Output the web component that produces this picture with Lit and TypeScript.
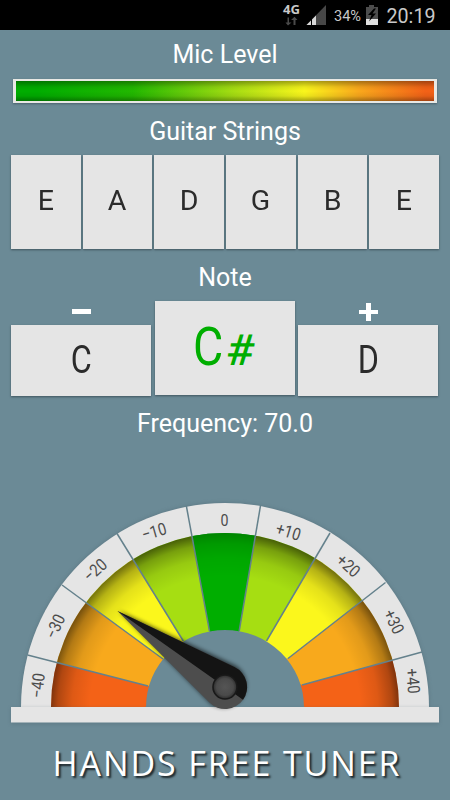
import { LitElement, html, svg, css } from "lit";
import { customElement, property } from "lit/decorators.js";

type Pt = [number, number];

// Dividers between the scale segments: rim point, hub point.
const DIVIDERS: [Pt, Pt][] = [
  [[20, 707], [145, 707]],
  [[27.5, 655], [148, 686]],
  [[62, 585], [163, 659]],
  [[117, 533.5], [183.3, 641]],
  [[186.3, 505.7], [209.5, 631]],
  [[260.5, 505.7], [239.2, 631]],
  [[330, 533], [266.5, 641]],
  [[385.5, 582.5], [288, 658.5]],
  [[422, 652], [302, 685]],
  [[430, 707], [305, 707]],
];

const COLORS = [
  "#f46217", "#f8a91c", "#fbf71c", "#a6de12", "#00ae00",
  "#a6de12", "#fbf71c", "#f8a91c", "#f46217",
];

// label, x, y, rotation, drawn length
const LABELS: [string, number, number, number, number][] = [
  ["−40", 37.5, 685.5, -84, 25],
  ["−30", 55, 626.5, -65, 25],
  ["−20", 95, 570, -42, 25],
  ["−10", 154, 531.5, -16, 25],
  ["0", 224.5, 519.5, 0, 8],
  ["+10", 288.5, 531.5, 17, 25],
  ["+20", 348.5, 565.5, 42, 25],
  ["+30", 394, 621.5, 64, 25],
  ["+40", 413, 681, 85, 25],
];

@customElement("tuner-status")
class TunerStatus extends LitElement {
  static styles = css`
    :host { display: flex; height: 30px; background: #000; justify-content: flex-end; font-family: Roboto, sans-serif; color: #c9c9c9; }
    svg { display: block; }
  `;
  render() {
    return html`<svg width="180" height="30" viewBox="270 0 180 30" font-family="Roboto, sans-serif">
      <text x="283" y="14" font-size="13" font-weight="700" textLength="17" lengthAdjust="spacingAndGlyphs" fill="#c9c9c9" font-family="Noto Sans, sans-serif">4G</text>
      <g fill="#4a4a4a">
        <path d="M289 17.5v5h2.5l-3.5 3-2.5-3h2v-5z"/>
        <path d="M293.5 25v-5h-2.5l3.500-3.200 3 3.200h-2v5z"/>
      </g>
      <path d="M306.500 25 326 5v20z" fill="#474747"/>
      <path d="M306.500 25 316 15.500v9.500z" fill="#d8d8d8"/>
      <path d="M311.500 19v6" stroke="#000" stroke-width="1"/>
      <text x="334" y="21" font-size="14.500" textLength="27" lengthAdjust="spacingAndGlyphs" fill="#c9c9c9">34%</text>
      <path d="M369 5h5v2h4v12h-12V7h3z" fill="#4d4d4d"/>
      <path d="M366 19h12v6h-12z" fill="#e0e0e0"/>
      <path d="M374 8.500 368 15h3.500l-2.500 6.500 7-8h-3.500l3.500-5z" fill="#000"/>
      <text x="386.500" y="23" font-size="21" textLength="49" lengthAdjust="spacingAndGlyphs" fill="#c9c9c9">20:19</text>
    </svg>`;
  }
}

@customElement("tuner-gauge")
class TunerGauge extends LitElement {
  @property({ type: Number }) cx = 225;
  @property({ type: Number }) cy = 707;

  static styles = css`
    :host { display: block; width: 450px; height: 240px; }
    svg { display: block; }
    .label { font-family: Roboto, sans-serif; font-size: 17px; fill: #4c4c4c; text-anchor: middle; }
  `;

  private half(r: number) {
    return `M${this.cx - r} ${this.cy}A${r} ${r} 0 0 1 ${this.cx + r} ${this.cy}`;
  }

  render() {
    return html`<svg width="450" height="240" viewBox="0 490 450 240">
      <defs>
        <clipPath id="ring"><path d="${this.half(174)}H304A79 77 0 0 0 146 707Z"/></clipPath>
        <radialGradient id="shade" gradientUnits="userSpaceOnUse" cx="225" cy="711" r="178">
          <stop offset="0.76" stop-color="#000" stop-opacity="0"/>
          <stop offset="0.86" stop-color="#000" stop-opacity="0.09"/>
          <stop offset="0.94" stop-color="#000" stop-opacity="0.28"/>
          <stop offset="1" stop-color="#000" stop-opacity="0.58"/>
        </radialGradient>
        <radialGradient id="knob"><stop offset="0" stop-color="#555"/><stop offset="0.7" stop-color="#4a4a4a"/><stop offset="1" stop-color="#2c2c2c"/></radialGradient>
        <filter id="soft" x="-20%" y="-20%" width="140%" height="140%"><feGaussianBlur stdDeviation="2"/></filter>
      </defs>
      <path d="${this.half(204)}Z" fill="#425963" opacity="0.4" filter="url(#soft)"/>
      <path d="${this.half(204)}Z" fill="#e5e5e5"/>
      <path d="${this.half(174)}Z" fill="#6b8a96"/>
      <g clip-path="url(#ring)">
        ${COLORS.map((c, i) => {
          const [a, b] = DIVIDERS[i];
          const [d, e] = DIVIDERS[i + 1];
          return svg`<polygon points="${[a, b, [225, 665], e, d].join(" ")}" fill=${c}></polygon>`;
        })}
        <path d="${this.half(174)}Z" fill="url(#shade)"/>
        <polygon points="186.300,505.700 209.500,630.500 239.200,630.500 260.500,505.700" fill="#00ae00" opacity="0.6"/>
      </g>
      ${DIVIDERS.slice(1, -1).map(([a, b]) => svg`<line x1=${a[0]} y1=${a[1]} x2=${b[0]} y2=${b[1]} stroke="#64818c" stroke-width="1.5"></line>`)}
      ${LABELS.map(([t, x, y, r, w]) => svg`<text class="label" transform="translate(${x} ${y}) rotate(${r})" y="6" textLength=${w} lengthAdjust="spacingAndGlyphs">${t}</text>`)}
      <rect x="11" y="708" width="428" height="16" fill="#425963" opacity="0.3" filter="url(#soft)"/>
      <rect x="11" y="707" width="428" height="15.500" fill="#e5e5e5"/>
      <path d="M119 611 236 666A22 22 0 1 1 211 704Z" fill="#000" opacity="0.65" filter="url(#soft)"/>
      <path d="M117.500 611 234.500 667.100A22 22 0 1 1 209.500 702.500Z" fill="#4d4d4d"/>
      <path d="M117.500 611 234.500 667.100A22 22 0 0 1 243 699.700L225 687Z" fill="#141414"/>
      <circle cx="225" cy="687" r="12" fill="url(#knob)" stroke="#191919" stroke-width="1.600"/>
    </svg>`;
  }
}

@customElement("app-root")
class AppRoot extends LitElement {
  static styles = css`
    :host { display: flex; flex-direction: column; width: 450px; height: 800px; overflow: hidden; background: #6b8a96; font-family: Roboto, sans-serif; color: #fff; }
    .title { display: flex; justify-content: center; align-items: center; font-size: 25px; line-height: 30px; flex: none; white-space: nowrap; box-sizing: border-box; }
    .mic { height: 48px; padding-top: 2px; }
    .guitar { height: 55px; padding-top: 2px; }
    .note { height: 52px; padding-top: 5px; }
    .freq { height: 54px; padding-top: 2px; }
    .meter { box-sizing: border-box; height: 24px; margin: 1px 13px 0; border: 2px solid #e8e8e4; border-width: 2px 3px; box-shadow: 0 1px 2px #4a616b; flex: none; }
    .fill { height: 100%; background:
      linear-gradient(#0005, #0001 30%, #0000 50%, #0001 75%, #0005),
      linear-gradient(90deg, #00ae00 5%, #22b900 28%, #a6de12 52%, #fbf71c 69%, #fba91c 82%, #f46217 98%); }
    .strings { display: grid; grid-template-columns: repeat(6, 1fr); gap: 2px; margin: -3px 11px 0; height: 94px; flex: none; }
    .card { display: flex; align-items: center; justify-content: center; background: #e5e5e5; color: #2b2b2b; box-shadow: 0 1px 2px #3f555e; }
    .strings .card { font-size: 28px; padding-bottom: 4px; box-sizing: border-box; }
    .glyph { display: inline-block; transform: scaleX(1.02); }
    .notes { display: grid; grid-template-columns: 140px 140px 140px; gap: 3.5px; margin: 0 11px; height: 95px; flex: none; }
    .side { display: flex; flex-direction: column; }
    .sign { height: 24px; display: grid; place-items: start center; }
    .sign svg { display: block; }
    .side .card { height: 70.5px; font-size: 38px; }
    .side .glyph { transform: scaleX(.85); }
    .current { height: 93.5px; color: #00ae00; font-size: 54px; }
    .current .glyph { width: 28px; display: flex; justify-content: center; transform: translateY(-1px) scaleX(.86); }
    .current .sharp { width: 29px; display: flex; justify-content: center; font-size: 43px; font-weight: 500; margin: 5px 0 0 4px; transform: skewX(-6deg) scaleX(1.08); }
    .gauge { margin-top: 40px; flex: none; }
    .brand { height: 66px; display: flex; justify-content: center; align-items: center; font: 34px/40px "Open Sans", sans-serif; letter-spacing: 1.9px; padding-left: 4px; text-shadow: 2px 2px 2px #1c2529; white-space: nowrap; }
  `;

  render() {
    return html`
      <tuner-status></tuner-status>
      <div class="title mic">Mic Level</div>
      <div class="meter"><div class="fill"></div></div>
      <div class="title guitar">Guitar Strings</div>
      <div class="strings">
        ${["E", "A", "D", "G", "B", "E"].map((s) => html`<div class="card"><span class="glyph">${s}</span></div>`)}
      </div>
      <div class="title note">Note</div>
      <div class="notes">
        <div class="side">
          <div class="sign"><svg width="20" height="20"><path d="M1 8h19v5H1z" fill="#fff"/></svg></div>
          <div class="card"><span class="glyph">C</span></div>
        </div>
        <div class="card current"><span class="glyph">C</span><span class="sharp">#</span></div>
        <div class="side">
          <div class="sign"><svg width="20" height="20"><path d="M1 9h7V2h5v7h7v4h-7v7H8v-7H1z" fill="#fff"/></svg></div>
          <div class="card"><span class="glyph">D</span></div>
        </div>
      </div>
      <div class="title freq">Frequency: 70.0</div>
      <tuner-gauge class="gauge"></tuner-gauge>
      <div class="brand">HANDS FREE TUNER</div>
    `;
  }
}
